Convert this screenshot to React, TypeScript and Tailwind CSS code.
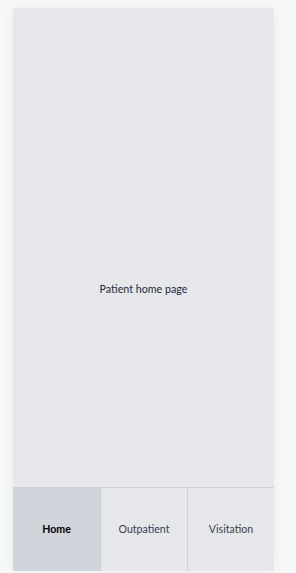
import React from "react";

export default function App() {
  const tabs = ["Home", "Outpatient", "Visitation"];
  return (
    <div className="min-h-[573px] w-[296px] bg-[#f7f8f8] pt-[8px] pl-[13px]" style={{ fontFamily: 'Lato, "Noto Sans", sans-serif' }}>
      <div className="relative flex h-[563px] w-[261px] items-center justify-center bg-[#e5e7eb] shadow-[0_0_12px_rgba(0,0,0,0.06)]">
        <div className="text-[10.7px] text-[#1f2937]">Patient home page</div>
        <div className="absolute inset-x-0 bottom-0 grid h-[84px] grid-cols-3 border-t border-[#cfd2d7]">
          {tabs.map((t, i) => (
            <div
              key={t}
              className={
                i === 0
                  ? "flex items-center justify-center bg-[#d1d5db] text-[10.6px] font-bold text-black"
                  : "flex items-center justify-center border-l border-[#cfd2d7] text-[10.6px] text-[#374151]"
              }
            >
              {t}
            </div>
          ))}
        </div>
      </div>
    </div>
  );
}
